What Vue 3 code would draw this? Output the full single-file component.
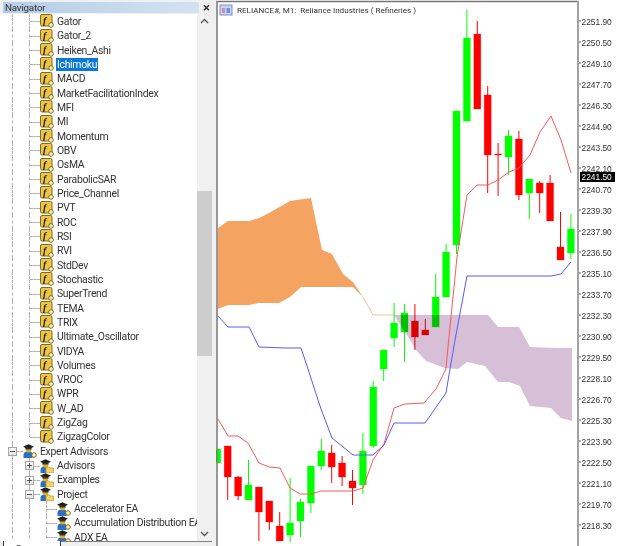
<template>
  <div class="terminal">
    <aside class="navigator">
      <header class="nav-head">
        <div class="nav-title">Navigator</div>
        <span class="nav-close">×</span>
      </header>
      <div class="nav-body">
        <div class="tree">
          <div v-for="row in rows" :key="row.label" class="row">
            <span v-for="n in row.guides" :key="n" class="guide"></span>
            <span class="elbow" :class="{ last: row.last }">
              <span v-if="row.toggle" class="toggle" :class="{ closed: row.toggle === 'plus' }"></span>
            </span>
            <svg v-if="row.icon === 'fn'" class="icon" viewBox="0 0 14 14">
              <rect x="0.5" y="0.5" width="11.500" height="11.500" rx="1.500" fill="#eec644" stroke="#806a22" />
              <text x="3" y="10" class="fn">f</text>
              <circle cx="11" cy="11" r="2.300" fill="#fff3b0" stroke="#806a22" stroke-width="1" />
            </svg>
            <svg v-else class="icon" viewBox="0 0 14 14">
              <path d="M0.500 11c0-2.200 1.500-3.500 3-3.500h3.500c1.500 0 2.500 1.300 2.500 3.500v3H0.500z" fill="#2a70c4" />
              <circle cx="5.500" cy="5.500" r="2.900" fill="#e3ad22" />
              <path d="M0 2.800 5.500 0.200 11 2.800 5.500 5.200z" fill="#1d1d1d" />
              <path d="M2.500 3.500h6v2h-6z" fill="#2f2f2f" />
              <path v-if="row.icon === 'folder'" d="M6 8h3l1 1h3.700v5H6z" fill="#f5d262" stroke="#b5952f" stroke-width="0.700" />
              <circle v-else cx="11" cy="11" r="2.300" fill="#fff3b0" stroke="#806a22" stroke-width="1" />
            </svg>
            <span class="label" :class="{ selected: row.selected }">{{ row.label }}</span>
          </div>
        </div>
        <div class="scrollbar">
          <svg class="arrow" viewBox="0 0 9 6"><path d="M1 5 4.500 1.500 8 5" fill="none" stroke="#555" stroke-width="1.300" /></svg>
          <div class="track"><div class="thumb"></div></div>
          <svg class="arrow" viewBox="0 0 9 6"><path d="M1 1l3.500 3.500L8 1" fill="none" stroke="#555" stroke-width="1.300" /></svg>
        </div>
      </div>
      <footer class="tabs">
        <span class="tab active">Common</span>
        <span class="tab">Favorites</span>
      </footer>
    </aside>

    <main class="chart">
      <svg class="canvas" viewBox="216 0 408 546" width="408" height="546">
        <rect x="216" y="0" width="408" height="546" fill="#fff" />
        <path :d="kumoUp" fill="#f4a460" />
        <polyline points="363,297 373,315 394,315" fill="none" stroke="#f4a460" stroke-width="1" opacity="0.7" />

        <g v-for="c in candles" :key="c.x">
          <line :x1="c.x" :x2="c.x" :y1="c.hi" :y2="c.lo" :stroke="c.color" stroke-width="1" />
          <rect :x="c.x - 3.5" :y="c.top" width="7" :height="c.bot - c.top" :fill="c.color" :stroke="c.color" stroke-opacity="0.25" stroke-width="1" />
        </g>

        <path :d="kumoDown" fill="#d8bfd8" class="multiply" />
        <polyline :points="kijun" fill="none" stroke="#f65a5a" stroke-width="1" />
        <polyline :points="tenkan" fill="none" stroke="#5a5af5" stroke-width="1" />

        <path d="M217 546V1.500H578.500" fill="none" stroke="#777" stroke-width="1.500" />
        <path d="M578 1V546" fill="none" stroke="#a2a2a2" stroke-width="2" />

        <g transform="translate(220 5)">
          <rect x="0" y="0" width="12" height="10" fill="#c8d4f4" stroke="#7f8fc8" />
          <rect x="2" y="3" width="3" height="5" fill="#d08fa8" />
          <rect x="6.500" y="3" width="3.500" height="5" fill="#6f8fe0" />
        </g>
        <text x="237" y="13" class="title">{{ title }}</text>

        <g v-for="p in prices" :key="p.label">
          <line x1="579" x2="581" :y1="p.y" :y2="p.y" stroke="#555" />
          <text x="581.500" :y="p.y + 3.500" class="price">{{ p.label }}</text>
        </g>
        <rect x="580" y="172" width="35" height="10" fill="#000" />
        <text x="581.500" y="180" class="price tag">2241.50</text>
      </svg>
    </main>
  </div>
</template>

<script setup>
const title = 'RELIANCE#, M1:  Reliance Industries ( Refineries )'

const indicators = [
  'Gator', 'Gator_2', 'Heiken_Ashi', 'Ichimoku', 'MACD', 'MarketFacilitationIndex', 'MFI', 'MI',
  'Momentum', 'OBV', 'OsMA', 'ParabolicSAR', 'Price_Channel', 'PVT', 'ROC', 'RSI', 'RVI', 'StdDev',
  'Stochastic', 'SuperTrend', 'TEMA', 'TRIX', 'Ultimate_Oscillator', 'VIDYA', 'Volumes', 'VROC',
  'WPR', 'W_AD', 'ZigZag', 'ZigzagColor'
]

const rows = [
  ...indicators.map((label) => ({
    label,
    guides: 1,
    icon: 'fn',
    selected: label === 'Ichimoku',
    last: label === 'ZigzagColor'
  })),
  { label: 'Expert Advisors', guides: 0, icon: 'ea', toggle: 'minus' },
  { label: 'Advisors', guides: 1, icon: 'folder', toggle: 'plus' },
  { label: 'Examples', guides: 1, icon: 'folder', toggle: 'plus' },
  { label: 'Project', guides: 1, icon: 'folder', toggle: 'minus' },
  { label: 'Accelerator EA', guides: 2, icon: 'ea' },
  { label: 'Accumulation Distribution EA', guides: 2, icon: 'ea' },
  { label: 'ADX EA', guides: 2, icon: 'ea' }
]

const UP = '#00ff00'
const DOWN = '#ff0000'

// hi, top, bot, lo, in pixels of the picture
const raw = [
  [UP, 449, 449, 463, 463], [DOWN, 446, 446, 477, 500], [DOWN, 476, 477, 496, 500],
  [UP, 460, 485, 500, 500], [DOWN, 487, 487, 512, 541], [DOWN, 501, 501, 522, 530],
  [DOWN, 512, 526, 541, 541], [UP, 478, 523, 535, 542], [UP, 499, 502, 521, 537],
  [UP, 466, 466, 503, 513], [UP, 439, 451, 466, 470], [DOWN, 445, 453, 467, 483],
  [DOWN, 456, 463, 477, 486], [DOWN, 470, 481, 488, 505], [UP, 433, 451, 485, 494],
  [UP, 381, 387, 446, 448], [UP, 350, 350, 369, 381], [UP, 303, 323, 338, 347],
  [UP, 304, 313, 332, 362], [DOWN, 304, 321, 337, 350], [DOWN, 319, 330, 335, 335],
  [UP, 274, 297, 327, 327], [UP, 244, 252, 297, 297], [UP, 111, 111, 245, 254],
  [UP, 10, 38, 121, 122], [DOWN, 21, 34, 109, 109], [DOWN, 86, 95, 155, 193],
  [DOWN, 143, 154, 155, 196], [UP, 130, 136, 157, 175], [DOWN, 131, 139, 195, 200],
  [UP, 179, 179, 193, 219], [DOWN, 181, 183, 193, 213], [DOWN, 175, 183, 221, 221],
  [DOWN, 212, 247, 260, 260], [UP, 214, 229, 253, 259]
]

const candles = raw.map(([color, hi, top, bot, lo], i) => ({
  x: 217.3 + i * 10.4,
  color,
  hi,
  top,
  bot,
  lo
}))

const toPath = (pts) => 'M' + pts.map((p) => p.join(' ')).join('L') + 'Z'

const kumoUp = toPath([
  [218, 228], [228, 221], [249, 221], [259, 218], [269, 213], [290, 201], [311, 198], [322, 250],
  [332, 254], [343, 274], [353, 282], [363, 297], [353, 287], [301, 287], [290, 297], [279, 303],
  [259, 303], [249, 305], [228, 305], [218, 309]
])

const kumoDown = toPath([
  [394, 315], [488, 315], [498, 327], [519, 327], [530, 347], [556, 348], [572, 348], [572, 421],
  [561, 418], [551, 408], [530, 406], [520, 386], [509, 382], [498, 382], [485, 366], [467, 362],
  [458, 369], [445, 368], [426, 361], [416, 350], [410, 340]
])

const kijun = [
  '218,419 228,436 238,436 248,443 259,463 269,467 280,468 290,488 300,494 311,494 321,491 353,491',
  '363,488 373,460 384,444 394,408 405,404 424,403 436,389 446,369 447,357 457,257 467,195 477,185',
  '488,185 498,180 509,172 519,168 530,155 540,132 551,116 561,140 571,173'
].join(' ')

const tenkan = [
  '218,316 228,327 249,327 259,347 285,348 301,348 307,366 321,409 332,438 353,455 373,455 384,445',
  '394,423 425,423 446,393 450,369 455,340 467,276 551,276 561,274 571,262'
].join(' ')

const prices = Array.from({ length: 25 }, (_, i) => ({
  y: 21 + i * 21,
  label: (2251.9 - i * 1.4).toFixed(2)
}))
</script>

<style scoped>
.terminal {
  display: flex;
  width: 624px;
  height: 546px;
  overflow: hidden;
  background: #f0f0f0;
}

.navigator {
  display: flex;
  flex-direction: column;
  width: 216px;
  flex: none;
  font-family: Roboto, "Noto Sans", sans-serif;
  color: #333;
}

.nav-head {
  display: flex;
  align-items: center;
  height: 13px;
  padding: 1px 0 0 3px;
  flex: none;
}

.nav-title {
  width: 194px;
  height: 11px;
  padding-left: 2px;
  background: linear-gradient(to right, #b4cde6, #d3e2f1);
  font-size: 9.800px;
  line-height: 11px;
  letter-spacing: -0.2px;
  filter: blur(0.3px);
}

.nav-close {
  margin-left: 4px;
  font-size: 13px;
  line-height: 10px;
  font-weight: 700;
  color: #333;
}

.nav-body {
  display: flex;
  width: 212px;
  height: 527px;
  flex: none;
  background: #fff;
  overflow: hidden;
}

.tree {
  width: 197px;
  flex: none;
  padding-top: 0.300px;
  overflow: hidden;
}

.row {
  display: flex;
  align-items: center;
  height: 14.330px;
  padding-left: 12px;
  white-space: nowrap;
}

.guide {
  width: 17px;
  height: 100%;
  flex: none;
  box-sizing: border-box;
  border-left: 1px dashed #b0b0b0;
}

.elbow {
  position: relative;
  width: 11px;
  height: 100%;
  flex: none;
  box-sizing: border-box;
  border-left: 1px dashed #b0b0b0;
}

.elbow::after {
  content: "";
  position: absolute;
  left: 0;
  right: 0;
  top: 50%;
  border-top: 1px dashed #b0b0b0;
}

.elbow.last {
  height: 50%;
  align-self: flex-start;
}

.elbow.last::after {
  top: 100%;
}

.toggle {
  position: absolute;
  z-index: 1;
  left: -5px;
  top: 3px;
  width: 7px;
  height: 7px;
  border: 1px solid #a6a6a6;
  background: linear-gradient(#fff, #dfe3e8);
}

.toggle::before {
  content: "";
  position: absolute;
  left: 1px;
  right: 1px;
  top: 3px;
  border-top: 1px solid #555;
}

.toggle.closed::after {
  content: "";
  position: absolute;
  top: 1px;
  bottom: 1px;
  left: 3px;
  border-left: 1px solid #555;
}

.icon {
  width: 14px;
  height: 14px;
  flex: none;
}

.fn {
  font: italic 700 10px "Liberation Serif", serif;
  fill: #222;
}

.label {
  margin-left: 2px;
  padding: 0 1px;
  font-size: 10.400px;
  line-height: 13px;
  letter-spacing: -0.3px;
  filter: blur(0.25px);
}

.label.selected {
  background: #0a78d7;
  color: #fff;
}

.scrollbar {
  display: flex;
  flex-direction: column;
  align-items: center;
  width: 15px;
  flex: none;
  background: #f0f0f0;
}

.arrow {
  width: 9px;
  height: 6px;
  margin: 4px 0;
  flex: none;
}

.track {
  width: 100%;
  flex: 1;
  padding-top: 163px;
}

.thumb {
  height: 165px;
  background: #cdcdcd;
}

.tabs {
  display: flex;
  width: 212px;
  height: 6px;
  padding-left: 3px;
  box-sizing: border-box;
  overflow: hidden;
  font-size: 10.500px;
  line-height: 12px;
}

.tab {
  flex: 1;
  padding: 3px 0 0 9px;
  border-top: 1px solid #808080;
}

.tab.active {
  flex: none;
  width: 58px;
  box-sizing: border-box;
  padding-left: 11px;
  border-top: 0;
  border-left: 1px solid #333;
  border-right: 1px solid #333;
  background: #fff;
}

.chart {
  flex: 1;
  background: #fff;
}

.canvas {
  display: block;
}

.multiply {
  mix-blend-mode: multiply;
}

.title {
  font: 8.100px Roboto, sans-serif;
  fill: #333;
  white-space: pre;
  filter: blur(0.25px);
}

.price {
  font: 8.400px "Liberation Sans", sans-serif;
  fill: #333;
  filter: blur(0.2px);
}

.tag {
  fill: #fff;
}
</style>
